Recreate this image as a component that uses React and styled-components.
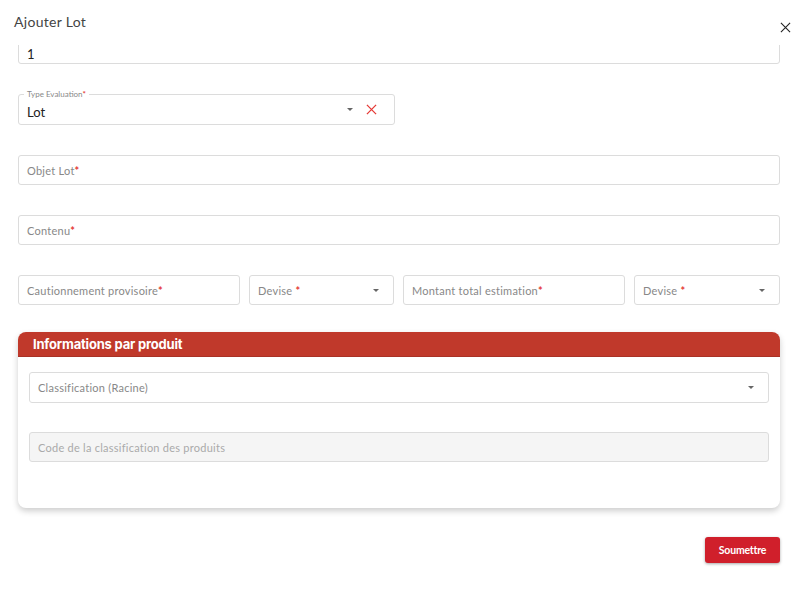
import React from "react";
import styled, { createGlobalStyle } from "styled-components";

const GlobalStyle = createGlobalStyle`
  html, body {
    margin: 0;
    padding: 0;
    background: #ffffff;
    font-family: Lato, "Open Sans", sans-serif;
  }
`;

const Dialog = styled.div`
  width: 801px;
  height: 591px;
  background: #fff;
  display: flex;
  flex-direction: column;
  overflow: hidden;
`;

const Header = styled.div`
  height: 45px;
  display: flex;
  justify-content: space-between;
  padding: 0 9px 0 14px;
  box-sizing: border-box;
`;

const Title = styled.h2`
  margin: 13px 0 0;
  font-size: 14px;
  font-weight: 400;
  color: #444;
  letter-spacing: 0.3px;
`;

const CloseButton = styled.button`
  border: 0;
  background: none;
  padding: 0;
  margin-top: 20px;
  width: 14px;
  height: 14px;
  display: flex;
  align-items: center;
  justify-content: center;
  cursor: pointer;
`;

const Content = styled.div`
  flex: 1;
  overflow: hidden;
  padding: 0 21px 0 18px;
`;

const Form = styled.form`
  margin-top: -11px;
  display: flex;
  flex-direction: column;
`;

const Row = styled.div`
  display: flex;
  gap: 9px;
  margin-bottom: ${(p) => p.$mb ?? 30}px;
`;

const Field = styled.div`
  position: relative;
  flex: ${(p) => (p.$w ? `0 0 ${p.$w}px` : "1")};
  height: ${(p) => p.$h || 30}px;
  box-sizing: border-box;
  border: 1px solid #dcdcdc;
  border-radius: 3px;
  background: ${(p) => (p.$disabled ? "#f5f5f5" : "#fff")};
  display: flex;
  align-items: center;
  padding: 0 8px;
`;

const Value = styled.span`
  font-size: 13px;
  color: #222;
  flex: 1;
  padding-top: ${(p) => p.$pt || 0}px;
`;

const Placeholder = styled.span`
  font-size: 11px;
  color: ${(p) => (p.$light ? "#aaa" : "#888")};
  flex: 1;
  letter-spacing: 0.25px;
`;

const Req = styled.span`
  color: #e53935;
  font-weight: 700;
`;

const Legend = styled.span`
  position: absolute;
  top: -6px;
  left: 5px;
  padding: 0 3px;
  background: #fff;
  font-size: 8px;
  color: #888;
  line-height: 10px;
`;

const Caret = styled.span`
  width: 0;
  height: 0;
  border-left: 3px solid transparent;
  border-right: 3px solid transparent;
  border-top: 3px solid #666;
  margin-right: ${(p) => p.$mr ?? 5}px;
`;

const Card = styled.div`
  border-radius: 8px;
  background: #fff;
  box-shadow: 0 3px 6px rgba(0, 0, 0, 0.2);
  overflow: hidden;
  margin-bottom: 29px;
`;

const CardHeader = styled.div`
  height: 25px;
  background: #c0392b;
  border-bottom: 1px solid #a93226;
  box-sizing: border-box;
  display: flex;
  align-items: center;
  padding-left: 15px;
  color: #fff;
  font-family: Inter, "Open Sans", sans-serif;
  font-weight: 700;
  font-size: 13px;
  letter-spacing: -0.2px;
`;

const CardBody = styled.div`
  padding: 15px 11px 46px;
  display: flex;
  flex-direction: column;
`;

const Footer = styled.div`
  display: flex;
  justify-content: flex-end;
`;

const SubmitButton = styled.button`
  width: 75px;
  height: 26px;
  border: 0;
  border-radius: 3px;
  background: #d01f2b;
  color: #fff;
  font-family: Lato, sans-serif;
  font-weight: 700;
  font-size: 10.5px;
  letter-spacing: -0.2px;
  box-shadow: 0 1px 3px rgba(0, 0, 0, 0.35);
  cursor: pointer;
`;

const Spacer = styled.span`
  width: ${(p) => p.$w}px;
`;

const XIcon = ({ size = 12, color = "#222", stroke = 1.3 }) => (
  <svg width={size} height={size} viewBox="0 0 12 12">
    <path d="M1 1 L11 11 M11 1 L1 11" stroke={color} strokeWidth={stroke} fill="none" />
  </svg>
);

export default function App() {
  return (
    <Dialog>
      <GlobalStyle />
      <Header>
        <Title>Ajouter Lot</Title>
        <CloseButton aria-label="close">
          <XIcon size={11} color="#222" stroke={1.2} />
        </CloseButton>
      </Header>
      <Content>
        <Form onSubmit={(e) => e.preventDefault()}>
          <Row>
            <Field>
              <Value $pt={9}>1</Value>
            </Field>
          </Row>

          <Row>
            <Field $w={377} $h={31}>
              <Legend>
                Type Evaluation<Req>*</Req>
              </Legend>
              <Value $pt={4}>Lot</Value>
              <Caret $mr={13} />
              <XIcon size={11} color="#e53935" stroke={1.4} />
              <Spacer $w={9} />
            </Field>
          </Row>

          <Row>
            <Field>
              <Placeholder>
                Objet Lot<Req>*</Req>
              </Placeholder>
            </Field>
          </Row>

          <Row>
            <Field>
              <Placeholder>
                Contenu<Req>*</Req>
              </Placeholder>
            </Field>
          </Row>

          <Row $mb={27}>
            <Field $w={222}>
              <Placeholder>
                Cautionnement provisoire<Req>*</Req>
              </Placeholder>
            </Field>
            <Field $w={145}>
              <Placeholder>
                Devise <Req>*</Req>
              </Placeholder>
              <Caret $mr={6} />
            </Field>
            <Field $w={222}>
              <Placeholder>
                Montant total estimation<Req>*</Req>
              </Placeholder>
            </Field>
            <Field>
              <Placeholder>
                Devise <Req>*</Req>
              </Placeholder>
              <Caret $mr={6} />
            </Field>
          </Row>

          <Card>
            <CardHeader>Informations par produit</CardHeader>
            <CardBody>
              <Row $mb={29}>
                <Field $h={31}>
                  <Placeholder>Classification (Racine)</Placeholder>
                  <Caret $mr={6} />
                </Field>
              </Row>
              <Row $mb={0}>
                <Field $disabled>
                  <Placeholder $light>Code de la classification des produits</Placeholder>
                </Field>
              </Row>
            </CardBody>
          </Card>

          <Footer>
            <SubmitButton type="submit">Soumettre</SubmitButton>
          </Footer>
        </Form>
      </Content>
    </Dialog>
  );
}
